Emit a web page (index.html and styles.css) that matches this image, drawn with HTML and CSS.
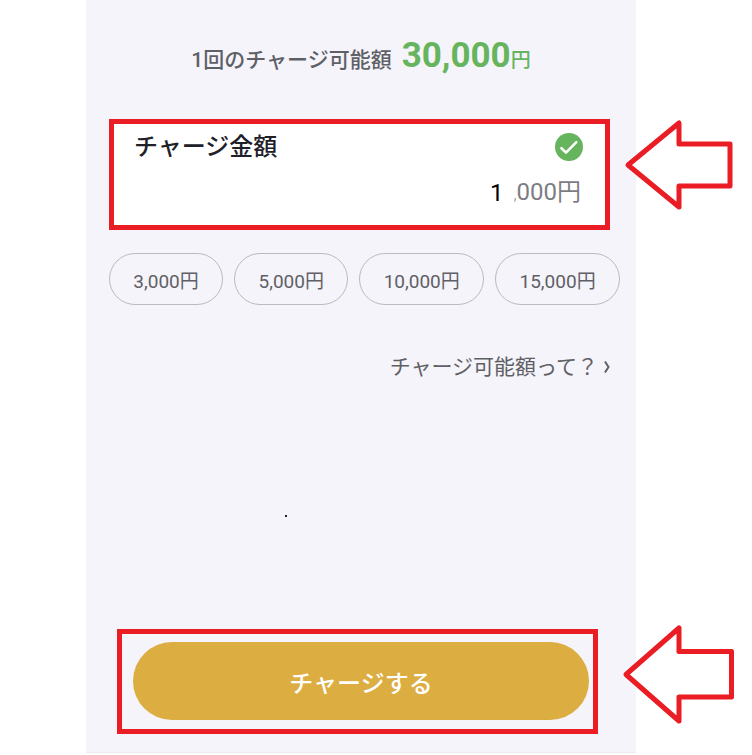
FILE: index.html
```html
<!DOCTYPE html>
<html lang="ja">
<head>
<meta charset="utf-8">
<meta name="viewport" content="width=device-width, initial-scale=1">
<title>チャージ</title>
<link rel="stylesheet" href="styles.css">
</head>
<body>
<main class="screen">
  <p class="limit">1回のチャージ可能額<span class="limit-amount"><strong>30,000</strong>円</span></p>

  <section class="amount callout">
    <div class="amount-head">
      <label class="amount-label" for="amount">チャージ金額</label>
      <svg class="check" viewBox="0 0 28 28" aria-hidden="true">
        <circle cx="14" cy="14" r="14"/>
        <path d="M6.5 15.2 L11 19.6 L21.3 9.2"/>
      </svg>
    </div>
    <div class="amount-row">
      <input class="amount-input" id="amount" type="text" inputmode="numeric" value="1">
      <span class="amount-unit"><span class="comma">,</span>000円</span>
    </div>
    <svg class="arrow arrow-top" viewBox="0 0 110 92" aria-hidden="true">
      <path d="M4 46 L55 4 V25 H106 V67 H55 V88 Z"/>
    </svg>
  </section>

  <div class="presets">
    <button class="preset" type="button">3,000円</button>
    <button class="preset" type="button">5,000円</button>
    <button class="preset" type="button">10,000円</button>
    <button class="preset" type="button">15,000円</button>
  </div>

  <a class="help" href="#">チャージ可能額って？<svg class="chevron" viewBox="0 0 6 14" aria-hidden="true"><path d="M1 1.5 L4.5 7 L1 12.5"/></svg></a>

  <span class="dot" aria-hidden="true"></span>

  <div class="submit callout">
    <button class="submit-button" type="button">チャージする</button>
    <svg class="arrow arrow-bottom" viewBox="0 0 112 100" aria-hidden="true">
      <path d="M4 50.5 L57 4 V27.5 H109.5 V73 H57 V97 Z"/>
    </svg>
  </div>
</main>
</body>
</html>
```
FILE: styles.css
```css
* {
  box-sizing: border-box;
}

body {
  margin: 0;
  background: #fff;
  color: #5f6066;
  font-family: Roboto, "Noto Sans CJK JP", sans-serif;
}

.screen {
  display: flex;
  flex-direction: column;
  min-height: calc(100vh - 2px);
  margin: 0 116px 2px 86px;
  padding: 32px 16px 18px 23px;
  background: #f5f4fa;
  border-bottom: 1px solid #ebeaf0;
}

.limit {
  display: flex;
  justify-content: center;
  align-items: baseline;
  gap: 10px;
  margin: 0 7px 35px 0;
  font-size: 21px;
  font-weight: 500;
  line-height: 48px;
  white-space: nowrap;
}

.limit-amount {
  color: #66b45d;
  font-size: 20px;
}

.limit-amount strong {
  font-size: 35px;
  font-weight: 700;
}

.callout {
  position: relative;
  border: 5px solid #ea1c24;
}

.amount {
  margin-right: 10px;
  padding: 8px 22px 13px 20px;
  background: #fff;
}

.amount-head,
.amount-row {
  display: flex;
  align-items: center;
}

.amount-head {
  justify-content: space-between;
  height: 29px;
}

.amount-label {
  color: #202128;
  font-size: 24px;
  font-weight: 500;
  line-height: 28px;
}

.check {
  width: 28px;
  height: 28px;
}

.check circle {
  fill: #66b45d;
}

.check path {
  fill: none;
  stroke: #fff;
  stroke-width: 2.6;
  stroke-linecap: round;
  stroke-linejoin: round;
}

.amount-row {
  gap: 10px;
  margin-top: 14px;
  padding-right: 2px;
  font-size: 24px;
  line-height: 35px;
}

.amount-input {
  flex: 1;
  min-width: 0;
  padding: 0;
  border: 0;
  outline: 0;
  background: none;
  color: #000;
  font: inherit;
  text-align: right;
}

.amount-unit {
  color: #7c7d83;
}

.comma {
  font-size: 16px;
  font-weight: 300;
}

.presets {
  display: flex;
  gap: 11px;
  margin-top: 23px;
}

.preset {
  flex: 1 1 auto;
  height: 52px;
  padding: 0;
  border: 1px solid #bbbac1;
  border-radius: 26px;
  background: none;
  color: #5f6066;
  font: inherit;
  font-size: 19px;
}

.help {
  display: flex;
  align-items: center;
  align-self: flex-end;
  gap: 6px;
  margin: 46px 10px 0 0;
  color: #5f6066;
  font-size: 21px;
  line-height: 32px;
  text-decoration: none;
}

.chevron {
  width: 6px;
  height: 14px;
}

.chevron path {
  fill: none;
  stroke: #5f6066;
  stroke-width: 2;
}

.dot {
  width: 2px;
  height: 2px;
  margin: 132px 0 0 176px;
  background: #222;
}

.submit {
  margin: auto 22px 0 8px;
  padding: 8px 4px 9px 11px;
}

.submit-button {
  display: block;
  width: 100%;
  height: 78px;
  border: 0;
  border-radius: 39px;
  background: #dcad41;
  color: #fff;
  font: inherit;
  font-size: 24px;
  font-weight: 500;
}

.arrow {
  position: absolute;
}

.arrow path {
  fill: #fff;
  stroke: #ea1c24;
  stroke-width: 5;
  stroke-linejoin: round;
}

.arrow-top {
  top: -5px;
  right: -129px;
  width: 110px;
  height: 92px;
}

.arrow-bottom {
  top: -10px;
  right: -141px;
  width: 112px;
  height: 100px;
}
```
